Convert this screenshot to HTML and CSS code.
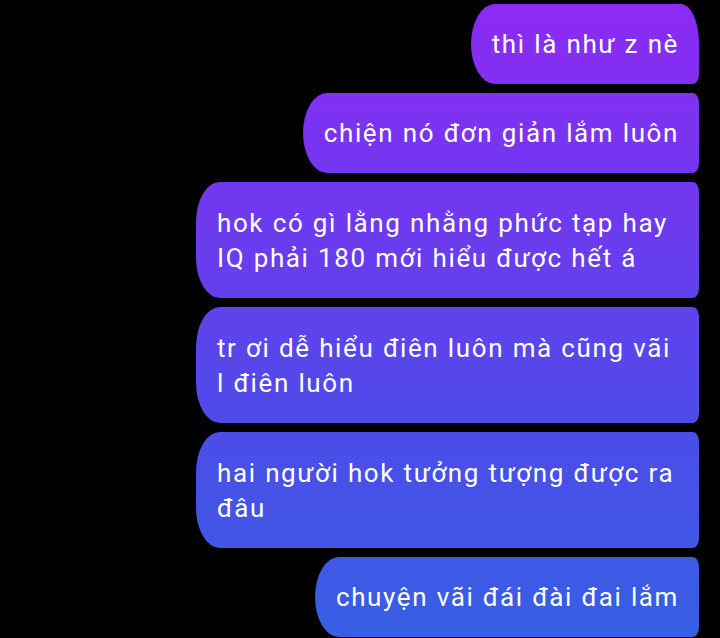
FILE: index.html
```html
<!DOCTYPE html>
<html lang="vi">
<head>
<meta charset="utf-8">
<title>Chat</title>
<link rel="stylesheet" href="styles.css">
</head>
<body>
<main class="thread">
  <div class="msg first">thì là như z nè</div>
  <div class="msg">chiện nó đơn giản lắm luôn</div>
  <div class="msg multi">hok có gì lằng nhằng phức tạp hay<br>IQ phải 180 mới hiểu được hết á</div>
  <div class="msg multi">tr ơi dễ hiểu điên luôn mà cũng vãi<br>l điên luôn</div>
  <div class="msg multi">hai người hok tưởng tượng được ra<br>đâu</div>
  <div class="msg">chuyện vãi đái đài đai lắm</div>
</main>
</body>
</html>
```

FILE: styles.css
```css
html, body {
  margin: 0;
  padding: 0;
  background: #000;
  height: 100%;
  overflow: hidden;
}

.thread {
  display: flex;
  flex-direction: column;
  align-items: flex-end;
  gap: 9px;
  padding: 4px 21px 0 0;
  font-family: Roboto, "Noto Sans", sans-serif;
}

.msg {
  box-sizing: border-box;
  max-width: 503px;
  padding: 23px 20px 22px 21px;
  font-size: 26px;
  line-height: 35px;
  letter-spacing: 1.6px;
  word-spacing: 0.5px;
  white-space: nowrap;
  color: #fff;
  border-radius: 24px 6px 6px 24px / 40px 10px 10px 40px;
  background: linear-gradient(180deg, #8d2af4 0%, #6e3aef 35%, #4a4ee8 70%, #375fe5 100%);
  background-attachment: fixed;
}

.msg.multi {
  width: 503px;
  padding-top: 24px;
}

.msg.first {
  border-radius: 24px 18px 6px 24px / 40px 40px 10px 40px;
}
```
